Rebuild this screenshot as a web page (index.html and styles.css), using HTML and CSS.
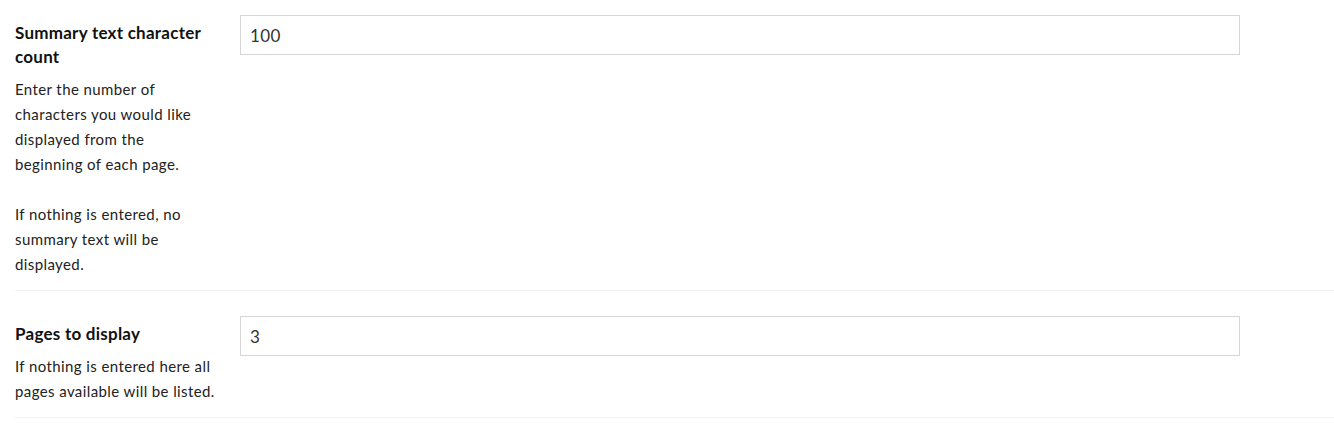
FILE: index.html
```html
<!DOCTYPE html>
<html lang="en">
<head>
  <meta charset="UTF-8" />
  <meta name="viewport" content="width=device-width, initial-scale=1.0"/>
  <title>Settings</title>
  <link rel="stylesheet" href="styles.css">
</head>
<body>
  <div class="settings">
    <div class="setting-row">
      <div class="setting-label">
        <h3>Summary text character count</h3>
        <p>Enter the number of characters you would like displayed from the beginning of each page.<br><br>If nothing is entered, no summary text will be displayed.</p>
      </div>
      <input type="text" class="setting-input" value="100" />
    </div>

    <div class="setting-row">
      <div class="setting-label">
        <h3>Pages to display</h3>
        <p>If nothing is entered here all pages available will be listed.</p>
      </div>
      <input type="text" class="setting-input" value="3" />
    </div>
  </div>
</body>
</html>
```

FILE: styles.css
```css
body {
  margin: 0;
  font-family: Lato, 'Open Sans', sans-serif;
  background-color: #fff;
  color: #1d1d1d;
}

.settings {
  padding-left: 15px;
}

.setting-row {
  display: flex;
  align-items: flex-start;
  gap: 25px;
  padding: 25px 0 13px;
  border-bottom: 1px solid #f1f1f1;
}

.setting-row:first-child {
  padding-top: 15px;
}

.setting-label {
  width: 200px;
  flex-shrink: 0;
  padding-top: 6px;
}

.setting-label h3 {
  margin: 0 0 8px;
  font-size: 17px;
  letter-spacing: 0.25px;
  line-height: 24px;
  font-weight: bold;
  color: #111;
}

.setting-label p {
  margin: 0;
  font-size: 15px;
  letter-spacing: 0.4px;
  line-height: 25px;
  color: #222;
}

.setting-input {
  width: 1000px;
  height: 40px;
  box-sizing: border-box;
  padding: 0 9px;
  border: 1px solid #d6d6d6;
  border-radius: 0;
  font-family: Lato, 'Open Sans', sans-serif;
  font-size: 17px;
  letter-spacing: 0.4px;
  color: #333;
  outline: none;
}
```
